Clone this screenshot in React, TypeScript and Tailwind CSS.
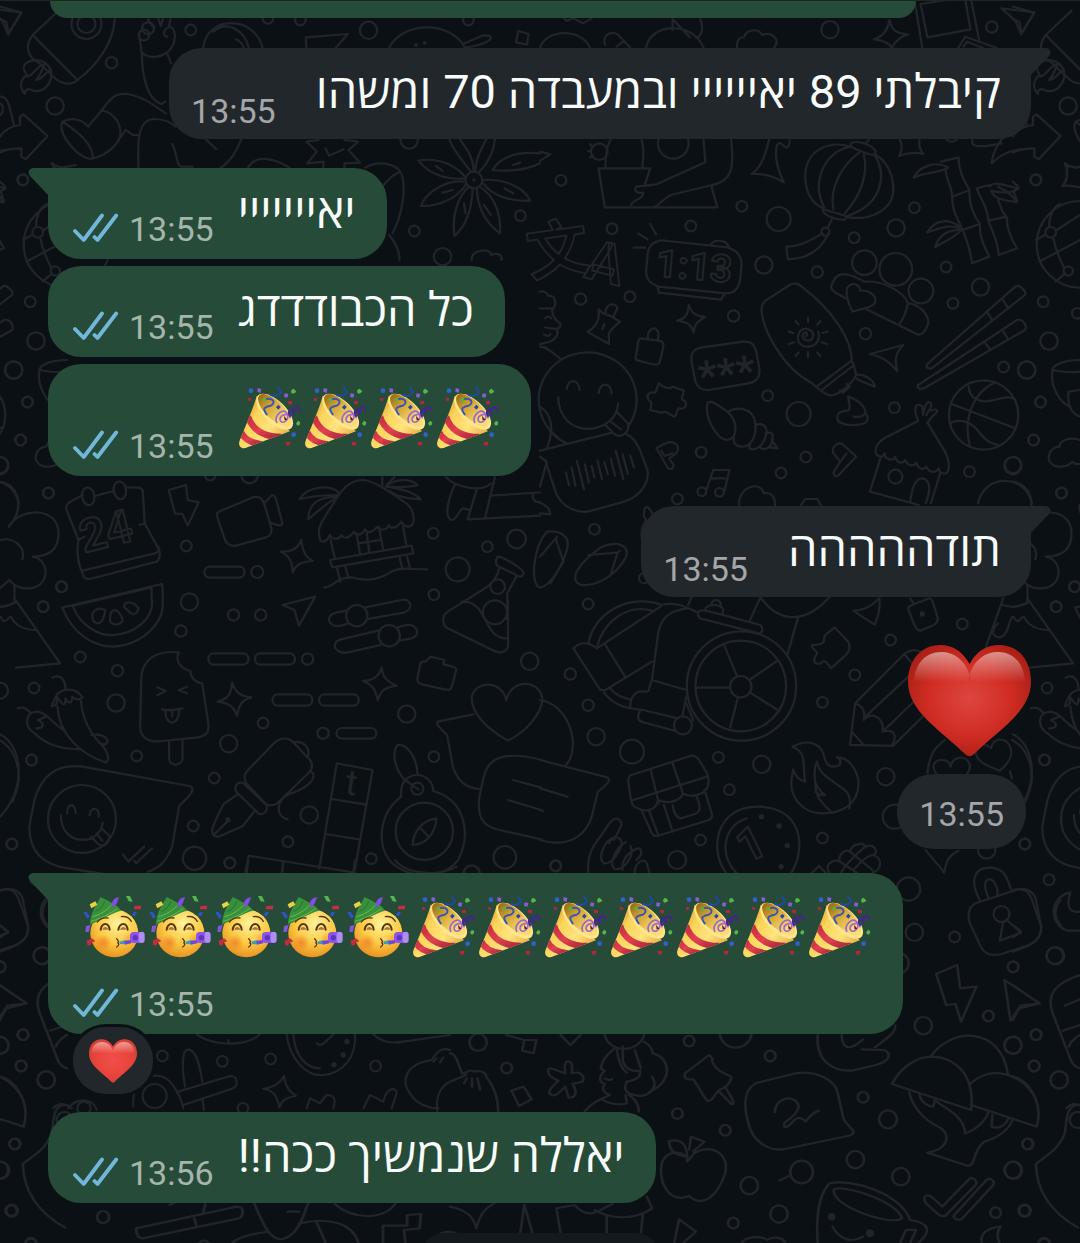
import { useId } from 'react';
import type { ReactNode } from 'react';
import clsx from 'clsx';

type Dot = [x: number, y: number, r: number];

interface Sheet {
  x: number;
  y: number;
  sx: number;
  sy: number;
  dots: Dot[];
  solid?: Dot[];
  paths: string[];
}

// The wallpaper is drawn in sheets, each with its own origin and scale
const sheets: Sheet[] = [
  {
    x: 0, y: 0, sx: 0.3444, sy: 0.3333,
    dots: [[251, 72, 45], [251, 72, 27], [430, 85, 18], [418, 105, 16], [554, 90, 16], [324, 188, 17], [160, 318, 26], [1070, 91, 26], [778, 55, 16], [872, 60, 16], [1188, 420, 26], [66, 540, 16], [1511, 647, 16], [1203, 693, 16], [1285, 770, 26], [1360, 60, 16], [1376, 540, 25]],
    solid: [[1376, 540, 5], [1208, 135, 6], [1233, 129, 6]],
    paths: [
      'M0 20L62 38L25 100L18 65L0 58',
      'M170 32L95 105C70 140 80 170 112 188L160 235C180 255 210 255 225 240C290 190 330 120 333 58M95 105L225 240',
      'M148 210C130 175 95 175 75 190C65 200 70 215 78 225C55 240 58 265 72 282C72 265 85 265 95 272C130 280 155 245 148 210C140 205 130 235 105 240C125 215 125 195 132 192C105 195 100 225 80 230',
      'M405 100C400 115 412 130 410 155C430 180 480 175 500 140C515 110 505 75 490 82C470 90 475 110 485 110M460 57L467 78L473 57M430 57C432 70 440 72 447 85M495 57L490 80M412 160C412 220 425 300 470 312L480 305M485 160L497 190',
      'M590 143C600 45 740 45 762 143M620 95C660 60 710 90 722 143M685 118C700 125 705 135 708 143',
      'M890 143L888 112L1010 102L975 143',
      'M1130 143C1170 62 1310 62 1350 143M1345 132L1400 107C1440 100 1440 130 1350 143',
      'M1505 93L1535 102L1530 134L1498 127Z',
      'M0 410C15 385 40 377 58 375V350L68 343L138 408L75 478L62 470V445C40 445 15 450 0 458',
      'M182 365C160 400 240 490 270 475C310 465 350 430 350 400C350 360 320 332 292 332M182 365C200 380 270 420 270 475M182 365C210 350 240 360 256 380L295 332',
      'M295 332C330 280 345 280 370 282C420 290 450 320 482 340M350 412L365 390L385 405H402M402 503C400 440 395 355 450 357C480 358 500 370 510 380M500 432C515 460 510 490 525 500H560M580 400L627 447M640 503C665 490 690 450 700 418M720 503C740 465 790 470 840 503',
      'M925 420L890 425L920 455L892 490L940 485L938 503M1000 420L1040 425L1012 450L1045 488L1000 490V503M945 445L955 467L998 448',
      'M1350 530C1310 480 1250 475 1215 482C1250 530 1310 540 1350 535M1368 515C1340 480 1310 440 1305 418M1375 512C1375 470 1350 440 1335 418M1380 512C1380 480 1400 440 1412 418M1392 515C1425 480 1435 440 1437 418M1430 510C1460 460 1520 455 1568 460M1430 510C1480 515 1530 510 1568 490',
      'M1403 540C1460 535 1520 560 1540 602C1490 605 1430 590 1403 550M1395 562C1440 590 1455 650 1452 700C1410 670 1385 620 1385 568M1372 568C1370 630 1350 680 1320 708C1310 650 1330 590 1360 562M1352 555C1330 590 1280 620 1222 618C1240 570 1300 540 1348 545',
      'M1265 498L1285 513M1490 495L1510 488M1465 565L1490 580M1405 615L1425 645M1347 610L1352 640M1285 578L1315 570',
      'M1060 503C1100 480 1150 490 1165 520C1180 560 1170 640 1140 700M1160 515C1130 530 1110 560 1108 565M1130 705C1150 730 1160 760 1160 780',
      'M1370 780C1365 745 1430 745 1425 765C1450 755 1460 770 1455 780',
      'M0 290C20 290 25 300 40 375M0 345C10 340 12 315 0 310M0 545L15 560L2 575L12 605H0M150 490L160 503M185 503L220 495',
    ],
  },
  {
    x: 540, y: 0, sx: 0.3444, sy: 0.3333,
    dots: [[1312, 81, 17], [842, 89, 26], [387, 430, 46], [172, 455, 25], [829, 695, 12], [61, 541, 16], [586, 619, 16], [209, 686, 16], [438, 678, 16], [693, 657, 36], [912, 713, 16], [1034, 684, 26], [1087, 623, 16], [1440, 539, 16], [1483, 697, 16], [1568, 733, 130], [1195, 405, 20]],
    paths: [
      'M70 57L80 62L95 55L125 70L150 55',
      'M0 143C20 85 120 85 145 143M190 135C175 105 215 85 232 110L262 143M245 122L222 140',
      'M308 143C320 70 440 60 475 143M385 57V90M385 57L435 112M465 57C475 80 470 100 460 112',
      'M572 143C570 120 580 110 592 112C600 85 635 85 645 105C670 95 700 115 680 143',
      'M1015 60C1020 90 1035 100 1068 103C1045 110 1030 125 1022 143C1010 125 990 120 970 118C995 110 1010 90 1015 60Z',
      'M1088 5L1110 143M1180 0L1105 12L1125 112L1250 88L1235 0M1252 0L1275 120M1215 143L1235 110L1325 143M1230 140L1240 125L1285 143',
      'M1340 25L1435 37L1397 103L1380 62Z',
      'M190 503C190 460 195 435 205 420M295 420C302 440 300 480 297 503M305 552L320 505H170L188 622H515L498 560M145 432L152 440M140 453H148M145 472L153 466',
      'M475 420L480 487L338 553L280 560C270 575 285 580 300 578C300 600 265 600 265 615M555 420C560 480 570 540 500 555L380 585C350 600 345 620 330 622',
      'M0 455L30 463L0 482M665 420C655 460 645 500 615 522C650 520 680 530 708 547C690 510 680 470 688 435C700 420 705 440 715 443C725 440 725 425 725 420',
      'M900 440C840 420 770 450 770 530C772 590 800 615 822 625M900 440C830 455 785 540 825 622M930 455C870 500 840 570 852 628M940 462C955 520 930 590 885 640M972 465C1005 520 1000 610 893 648M975 465C1020 490 1035 560 1020 600C1000 640 950 660 895 652',
      'M905 428C930 420 970 440 975 455C972 470 960 465 935 455C910 445 895 440 905 428ZM822 625C815 645 860 660 885 660L892 650C870 640 835 635 822 625ZM848 658L835 683M838 700C820 740 790 775 720 778L715 740C750 740 790 720 820 700M945 430L955 420',
      'M1045 420C1055 440 1050 455 1043 468C1070 458 1090 455 1113 462C1100 445 1100 430 1102 420M1255 420C1250 440 1270 445 1340 430M1350 405C1325 435 1312 470 1312 490C1340 460 1370 450 1400 448',
      'M1085 533C1100 500 1150 480 1185 503C1160 520 1120 515 1085 533M1165 485L1215 472C1215 510 1230 540 1247 570C1245 610 1255 640 1277 672C1275 710 1290 740 1305 770L1255 790C1250 760 1240 720 1227 690C1215 660 1195 630 1197 590C1195 560 1180 540 1178 512M1197 590L1247 570M1227 690L1277 672',
      'M1305 555L1268 565C1280 600 1300 620 1302 662C1310 690 1330 720 1332 765L1385 745C1370 720 1355 690 1355 650C1340 640 1340 620 1330 600M1302 662L1355 650M1305 560C1320 540 1360 560 1390 565C1370 580 1340 580 1310 572C1320 600 1350 600 1383 607C1375 585 1350 570 1330 560',
      'M1125 697C1145 660 1190 650 1222 685C1180 670 1150 690 1125 697M1225 688C1190 690 1160 700 1147 742C1180 720 1210 710 1222 690',
      'M1568 500C1555 505 1535 500 1525 490C1535 520 1530 545 1517 558C1540 555 1560 560 1568 562',
      'M1568 645L1500 690M1440 720L1466 705M1478 680C1478 650 1490 620 1510 612M1490 712C1495 740 1510 780 1522 803M1450 785L1568 720M1497 845L1525 820',
      'M285 700L312 718M320 672L337 703M272 743H305',
    ],
  },
  {
    x: 540, y: 240, sx: 0.3444, sy: 0.3333,
    dots: [[650, 75, 26], [805, 96, 17], [942, 68, 37], [1033, 88, 49], [1106, 153, 37], [1179, 81, 16], [1199, 190, 16], [1279, 141, 26], [1461, 185, 16], [1560, 220, 16], [118, 177, 17], [261, 170, 16], [562, 228, 17], [945, 281, 17], [1478, 303, 26], [1346, 381, 16], [1413, 390, 26], [661, 467, 16], [751, 522, 36], [1029, 503, 16], [1288, 525, 104], [1453, 486, 16], [1433, 600, 16], [468, 637, 16], [772, 651, 16], [700, 699, 16], [1032, 710, 21], [1247, 695, 16], [1373, 677, 26], [1514, 759, 16], [470, 755, 13], [521, 757, 13], [1534, 93, 14]],
    paths: [
      'M340 5C320 10 312 30 312 50L308 90C308 120 320 130 345 140L540 160C570 160 580 140 582 110L585 75C587 50 570 30 545 22L370 3C355 0 345 0 340 5ZM495 15C505 -5 545 0 548 22M342 142L345 158L525 179L535 163',
      'M0 155C20 150 20 165 25 168C45 165 48 190 40 205H0M35 207C35 230 45 240 60 252C60 270 40 268 15 262M50 270C55 290 40 305 10 310L0 312M12 283C20 290 28 288 30 283M15 235C20 228 28 228 32 235M0 320C20 320 40 340 60 357',
      'M170 208C185 225 195 225 205 228L232 245C215 260 205 270 200 280V312L137 275C160 265 175 240 170 208ZM190 220C190 190 220 185 225 205L212 232M187 252L181 268',
      'M292 295L345 302C358 305 360 310 357 325L348 365C345 375 340 375 325 372L285 362C275 360 277 350 280 340L285 305C287 297 288 295 292 295M313 296C310 260 345 255 344 285L342 300',
      'M432 195C440 222 455 228 480 231C455 245 448 255 446 278C440 250 420 245 398 242C425 235 430 220 432 195Z',
      'M470 322L590 305C615 303 622 315 628 335L637 385C640 410 630 425 605 430L490 450C465 452 455 440 450 420L440 365C437 340 445 327 470 322Z',
      'M725 135C735 128 750 130 760 140C850 210 905 300 905 360L918 400C918 420 870 465 845 466C830 466 800 440 790 430C700 380 650 270 643 215C643 200 645 190 655 182ZM803 440L905 362M818 450L912 375M870 450L880 458L900 440L890 432M918 405C940 400 970 420 972 440L925 420L915 412',
      'M772 290C782 278 768 272 763 284C760 300 785 310 792 292C798 270 770 258 755 274C740 300 755 322 780 320C802 318 815 298 808 276',
      'M778 233V246M742 243L751 254M814 243L805 254M722 275L736 279M835 275L820 279M722 312L738 307M834 312L818 307M742 348L751 337M778 352V337M814 348L805 337',
      'M942 125C890 95 860 90 845 140C843 155 870 165 893 177M942 125C1000 120 1060 160 1068 190C1065 210 1055 235 1045 250M942 205L1095 283C1115 290 1130 250 1127 240C1120 210 1090 190 1068 190M908 215C890 180 880 140 905 133C920 130 930 140 930 152C960 150 980 170 972 190C965 205 930 205 908 215Z',
      'M958 342L1055 315C1030 340 1030 365 1038 394C1010 360 990 350 958 342Z',
      'M1125 372L1380 140C1390 130 1415 155 1408 165L1140 383C1125 390 1118 380 1125 372ZM1297 215L1313 240M1343 178L1360 205M1098 435L1385 240C1405 235 1415 262 1408 270L1115 445C1100 450 1093 442 1098 435ZM1290 305L1308 330M1343 272L1360 298',
      'M52 592A142 142 0 1 1 255 560M78 447C80 415 112 415 115 450M170 460C175 425 205 425 208 460M53 472C55 600 220 590 227 490M190 555L212 578C235 605 265 570 255 550L225 518M205 545L235 568',
      'M345 430C355 440 375 450 385 440L418 452C415 470 405 480 420 482C430 495 420 510 402 505C395 515 398 525 390 530C375 525 370 510 350 518L320 510C325 490 325 485 315 480C308 465 315 455 335 458Z',
      'M485 495C480 530 510 600 545 600C580 590 570 540 545 515C520 500 490 470 485 495ZM545 515C570 500 620 500 625 550C630 590 610 620 590 620C570 620 560 610 563 595M625 555C650 545 665 565 655 590C645 620 625 635 608 625L610 610M655 580C680 570 680 595 670 615C660 630 645 630 640 622M672 600L690 625L665 622',
      'M895 470C925 480 945 500 945 520C955 530 955 550 930 553C890 560 860 550 863 530C865 515 880 512 895 512C905 500 895 490 895 470ZM910 530C925 532 940 528 945 518',
      'M1098 543L1005 592C975 610 970 630 978 645C990 650 995 655 1000 640C1000 660 1030 665 1030 650C1040 675 1055 670 1060 660C1070 680 1085 680 1092 668C1100 690 1115 690 1122 680C1130 700 1150 700 1158 685C1160 705 1185 705 1185 690C1192 670 1180 640 1170 625L1125 548M1098 543C1080 500 1095 485 1110 500L1112 525M1112 525C1120 470 1140 485 1135 500L1122 525M1125 548L1140 528C1165 510 1150 505 1135 512',
      'M988 655L958 755L1100 795M1162 700L1135 790M1075 785C1080 740 1090 715 1110 715C1135 720 1135 750 1120 790',
      'M1197 493L1380 565M1320 428C1270 450 1225 520 1248 618M1245 440C1245 475 1280 490 1310 482C1340 475 1365 465 1380 480M1190 550C1220 535 1250 545 1270 570C1300 610 1310 610 1330 615',
      'M1568 360C1520 360 1490 375 1488 390C1540 400 1568 395 1568 395M1488 390C1480 440 1510 490 1540 500M1568 450L1535 455C1530 490 1540 520 1568 530',
      'M1568 600C1540 590 1510 600 1508 620C1480 620 1465 660 1490 675C1510 685 1535 680 1545 665C1555 675 1568 672 1568 672M1272 790C1290 700 1410 700 1428 790',
      'M0 632L210 578M250 582C275 595 280 610 290 630L312 690C318 730 290 770 245 785L150 812C110 825 60 800 45 755L15 660',
      'M75 697L84 735M92 683L103 738M107 663L128 748M130 673L142 727M150 678L158 713M167 662L180 718M187 668L197 703M205 655L218 707M220 632L242 718M240 643L255 702M262 647L273 683',
      'M0 500C30 520 45 560 20 625M30 575C45 590 60 605 75 608M0 650L20 665L0 740',
      'M338 625L360 612C380 600 405 610 400 630C398 645 380 650 375 655L388 675C388 690 375 690 370 682ZM352 632L362 648L385 640',
      'M918 650L878 612C860 605 845 625 852 640L872 665L853 695C850 710 865 712 870 702ZM872 665L890 640',
      'M483 750L503 690H550L535 755M497 715H545M578 795C575 740 640 720 650 760C670 755 685 770 682 800',
    ],
  },
  {
    x: 0, y: 360, sx: 0.3444, sy: 0.3333,
    dots: [[40, 30, 26], [80, 126, 16], [60, 240, 16], [0, 315, 24], [141, 399, 16], [541, 558, 16], [747, 636, 18], [179, 680, 16], [125, 740, 16], [550, 726, 26], [678, 765, 17], [757, 765, 17], [1258, 520, 16], [1500, 537, 28], [1415, 560, 16], [1329, 628, 36], [1260, 704, 16], [725, 345, 25], [610, 345, 16], [1445, 680, 22]],
    paths: [
      'M0 365C60 375 70 450 25 500C60 440 170 440 170 520C170 580 130 590 95 590C150 600 145 690 75 685C50 685 35 670 27 660L0 685M0 540C40 530 75 560 65 598M42 675V730L0 742',
      'M240 405L205 425C190 435 190 440 195 455L228 540C220 580 230 620 243 650C250 660 260 658 270 655L455 605C465 600 465 580 462 570L420 490L415 395C412 382 405 380 365 383M275 408L330 393M240 632L450 580C462 575 462 570 460 560M228 540L245 530M420 490L405 495',
      'M238 405C238 375 272 375 274 410C276 445 240 445 238 405ZM330 387C330 357 364 357 366 392C368 427 332 427 330 387Z',
      'M490 390L540 375L545 420L577 427L545 497L530 462L508 460Z',
      'M635 455L735 412C760 405 765 425 770 440L788 505C790 525 780 530 770 533L685 557C665 560 655 550 650 530L632 475C628 460 630 458 635 455ZM767 430L790 405C800 405 800 410 820 490C818 500 812 498 785 488',
      'M930 540C915 500 940 480 980 410C1000 380 1020 360 1055 360C1080 362 1110 380 1180 430C1205 450 1210 500 1185 500C1170 500 1170 490 1165 485C1150 510 1130 505 1130 495C1120 515 1100 510 1095 500C1080 520 1065 520 1060 508C1050 530 1030 525 1028 515C1010 540 995 535 992 525C980 545 960 535 958 525C950 545 935 550 930 540Z',
      'M980 405C940 405 900 410 870 417C890 380 960 370 985 400M980 410C950 430 920 455 895 478C895 430 930 410 980 410M1110 352V382M1120 380C1150 355 1190 355 1213 375C1180 385 1150 380 1120 380C1160 385 1200 395 1222 418C1180 415 1150 410 1130 392M1122 375L1145 352',
      'M960 540L972 595M1035 520L1045 580M1100 500L1112 565M1170 500L1180 555M1040 550L1105 540M1065 520L1072 575M958 600L1195 557L1200 580L965 622ZM978 622L988 665M1003 620L1012 655M1160 590L1167 622M1182 590L1190 622M942 683C970 680 980 650 1020 652C1060 665 1090 660 1120 645C1160 615 1190 630 1240 628',
      'M875 540C878 570 885 590 908 603C880 605 860 610 850 637C848 600 840 590 815 575C850 575 865 565 875 540Z',
      'M610 620H695C715 620 715 653 695 653H610C588 653 588 620 610 620Z',
      'M180 743L470 672C474 690 473 705 472 720M210 738L440 682V720',
      'M820 735L915 710L868 797L855 750Z',
      'M1445 590C1460 590 1520 625 1520 640C1515 655 1505 650 1495 643L1445 618C1435 608 1440 598 1445 590ZM1450 625C1440 660 1425 675 1400 690L1300 755M1500 648L1473 700V780',
      'M1295 352C1320 380 1400 400 1425 370M1320 375C1300 420 1290 470 1310 480C1330 480 1330 450 1345 445L1365 450M1385 385L1358 478L1568 467M1437 352L1408 475M1425 407L1568 397M1550 400C1540 420 1560 430 1568 425',
    ],
  },
  {
    x: 540, y: 490, sx: 0.3444, sy: 0.3333,
    dots: [[399, 27, 16], [158, 118, 16], [140, 342, 16], [302, 265, 15], [88, 552, 17], [140, 646, 17], [163, 740, 26], [1018, 450, 16], [914, 555, 16], [820, 637, 16], [1226, 402, 16], [1552, 290, 16], [1499, 350, 16], [267, 785, 36], [585, 588, 164], [583, 588, 136], [583, 590, 32], [415, 706, 27]],
    solid: [[1110, 372, 8]],
    paths: [
      'M20 125C60 120 85 140 80 170C70 220 30 290 0 293C-30 285 -20 170 20 125M50 140L0 200M45 145L68 215L30 280M180 170C230 150 260 170 250 200C230 240 180 290 120 285C80 270 110 220 180 170ZM140 195L225 188L205 255M225 188L232 182',
      'M0 38C20 45 30 60 30 73L0 70M315 100L302 80C300 40 315 45 328 75M305 95C295 110 290 140 300 160M758 45L770 27H805L815 45',
      'M535 467L572 558M688 513L608 570M450 593H550M695 663L610 608M552 713L575 622',
      'M460 365C470 355 480 362 640 405C650 415 645 430 635 430L465 385C458 378 458 370 460 365ZM480 360C480 345 500 345 510 345C530 350 535 355 530 370M497 345C500 325 525 325 525 347',
      'M97 475C115 455 140 455 165 475L350 350M97 475L175 600H190L325 515M140 460C160 370 250 310 355 345M165 475C180 400 250 340 325 362M188 462L247 560M350 345C400 335 420 350 460 368M430 355C370 360 350 390 343 430L325 570C310 605 325 605 300 605C280 600 260 620 262 655M185 607C210 640 240 655 300 660L400 685M205 597C225 620 245 625 262 628M325 570L425 600M425 620L413 680M290 665C280 680 285 695 300 697L390 722M445 690L425 640',
      'M440 322L430 345M610 390L640 322C680 380 720 385 750 380C790 375 820 345 840 322M750 380L718 495',
      'M910 362C950 360 970 340 985 325C990 360 980 385 972 404L935 380Z',
      'M1080 345L1130 325C1140 325 1140 335 1155 385C1155 400 1150 405 1105 422C1090 420 1090 410 1070 360C1068 350 1072 350 1080 345ZM1075 325L1085 340',
      'M855 412L895 455C905 480 895 490 870 512L845 535C835 520 825 505 815 520C795 525 790 510 805 490C800 475 785 475 790 465C810 465 825 460 825 450C822 430 840 430 855 412Z',
      'M915 640L1060 490C1080 475 1100 480 1110 490M945 680L1085 545M1060 495L1080 520M1000 720L1110 610M915 640L900 765L1025 768L1140 650M905 725L940 765M915 640C940 650 945 670 940 690C970 660 1000 690 995 725C1030 715 1040 740 1020 768',
      'M1345 325L1295 470M1415 325L1548 520L1420 533M1345 345C1370 355 1400 350 1418 335M1330 400C1310 420 1310 440 1335 442C1365 435 1360 380 1375 380C1390 410 1395 380 1405 380C1420 410 1450 420 1475 420',
      'M0 630C60 640 90 700 95 750C97 790 90 810 75 825',
    ],
  },
  {
    x: 0, y: 600, sx: 0.3444, sy: 0.3333,
    dots: [[525, 93, 17], [233, 171, 16], [341, 212, 17], [99, 264, 16], [337, 309, 26], [0, 272, 24], [893, 177, 17], [764, 369, 16], [664, 431, 26], [397, 468, 16], [91, 480, 16], [938, 400, 17], [1181, 342, 26], [1260, 470, 16], [622, 534, 16], [561, 678, 16], [34, 732, 16], [565, 775, 35], [667, 789, 16], [836, 725, 16], [898, 645, 26], [1078, 776, 16], [1538, 184, 26], [1466, 772, 34], [1036, 47, 32], [1130, 107, 32], [1437, 37, 36], [238, 657, 102], [1232, 694, 86], [1212, 566, 18]],
    solid: [[662, 660, 8]],
    paths: [
      'M182 25C210 100 270 140 330 140C410 135 480 70 472 0M212 20C235 80 290 108 330 105C390 100 445 60 442 0M268 45C270 30 290 20 305 30C305 50 295 70 282 70C270 65 268 60 268 45ZM320 65C318 40 325 25 340 32C355 50 358 60 355 65C345 75 330 78 320 65ZM360 20C360 0 390 5 402 25C400 40 390 45 380 40Z',
      'M1004 32L975 38C940 48 955 85 990 77L1012 70M1060 22L1165 0C1190 -8 1205 25 1175 37L1068 57M1098 92L990 118C955 128 975 165 1010 157L1105 135M1155 82L1180 75C1210 70 1225 105 1195 115L1160 122',
      'M1300 35C1285 45 1280 75 1300 85L1440 155C1455 160 1470 155 1475 140V0M1340 5C1420 0 1400 120 1475 115',
      'M620 160H705C727 160 727 194 705 194H620C600 194 600 160 620 160ZM756 160H840C862 160 862 194 840 194H756C735 194 735 160 756 160ZM807 283H891C912 283 912 317 891 317H807C786 317 786 283 807 283ZM942 283H1026C1047 283 1047 317 1026 317H942C921 317 921 283 942 283ZM993 384H1077C1098 384 1098 416 1077 416H993C972 416 972 384 993 384Z',
      'M152 233C180 220 190 245 190 268M150 318C170 320 165 300 165 290C185 320 190 320 190 295C200 315 210 310 210 290C220 300 230 300 240 293C220 260 180 265 165 285C155 300 155 310 150 318M167 320C170 400 230 460 305 487C320 485 315 460 300 440C270 410 240 370 235 303M52 325C70 318 80 330 90 340M100 400C70 380 70 335 110 335C140 340 150 370 185 390M100 400C130 430 170 450 235 447M105 385C130 385 130 370 110 360C125 355 130 350 135 350M265 405C290 400 310 410 312 425C310 435 300 435 290 430',
      'M0 403C70 440 75 570 0 650',
      'M520 157C450 150 410 180 410 240L407 380C407 410 430 430 470 423L575 412C600 405 607 400 605 370L587 250C565 248 553 230 553 213C520 205 508 180 520 157ZM491 422V475C491 500 530 500 530 475V418M457 262L481 273L457 286M543 260L519 271L543 280M470 328C490 333 510 330 530 325M480 332C480 380 520 380 520 330M500 333V350',
      'M674 248C685 280 700 290 730 292C700 300 695 315 688 347C680 320 665 310 632 305C665 295 672 280 674 248ZM1108 202C1112 235 1125 245 1152 257C1120 262 1105 270 1097 301C1090 265 1080 255 1054 243C1085 240 1100 230 1108 202Z',
      'M1235 185L1250 170L1290 180L1287 193L1315 200C1328 205 1325 210 1322 220L1312 260C1308 272 1300 270 1290 268L1225 253C1212 250 1210 240 1213 230L1220 192C1222 183 1228 185 1235 185Z',
      'M1475 422C1420 390 1365 340 1370 290C1380 240 1460 240 1470 302C1485 230 1572 240 1575 300C1570 340 1535 390 1475 422ZM1375 343L1270 365V375L1298 405L1315 500C1330 550 1360 565 1392 567',
      'M1572 480C1500 460 1420 455 1405 530L1392 590C1385 650 1400 680 1450 690L1572 718M1490 540L1572 563M1475 600L1572 630',
      'M100 600C120 530 160 490 240 500L550 558C565 565 565 575 520 618L500 740C480 790 460 805 430 815M100 600L85 680C85 750 120 795 200 805L350 830M195 640C195 605 220 610 220 640M260 645C262 620 288 620 287 650M177 645C175 740 290 740 298 668M265 710L285 732C305 750 325 715 315 705L295 685M280 700L297 722M357 763L373 785L418 740M390 782L395 790L442 745',
      'M800 425C820 410 840 415 850 425L900 480C910 495 905 510 895 520L805 610C790 620 775 615 770 610L715 550C705 530 712 520 720 510ZM700 548C680 550 680 570 690 580L750 640C765 650 785 625 770 612L705 548ZM690 583L650 612C635 640 620 670 616 690C615 710 630 712 640 708L705 678L738 635M625 700L660 665M850 427C880 420 900 440 895 470M905 515C925 540 880 570 840 582C800 600 800 650 835 658',
      'M978 490L1082 510L1030 810M978 490L927 805M963 597L1060 613M945 702L1043 718M713 815L722 767L1030 818M822 790L820 815',
      'M1165 590C1100 640 1095 730 1130 780C1180 840 1290 840 1330 780C1370 700 1350 600 1258 573M1165 590C1160 540 1190 525 1212 525C1240 525 1258 550 1258 573M1212 520C1210 470 1180 430 1155 435C1140 450 1140 500 1175 540L1215 568M1267 655C1230 660 1200 690 1198 735C1235 735 1265 700 1267 655ZM1218 682L1245 710',
    ],
  },
  {
    x: 540, y: 740, sx: 0.3444, sy: 0.3333,
    dots: [[518, 52, 16], [644, 73, 26], [550, 149, 16], [466, 300, 16], [46, 377, 16], [398, 360, 27], [1004, 110, 26], [820, 294, 16], [1465, 60, 16], [1408, 312, 16], [1478, 419, 16], [1070, 447, 35], [1087, 577, 26], [1204, 591, 16], [1374, 681, 16], [1497, 647, 26], [1030, 230, 36], [1297, 330, 26], [1340, 522, 24]],
    solid: [[643, 230, 8], [694, 258, 8], [718, 317, 8], [700, 380, 8]],
    paths: [
      'M0 60L195 112C205 118 205 125 168 155L155 210C140 290 80 325 0 300M0 145L80 170M0 210L8 213',
      'M265 105L440 47C455 45 460 55 485 100C495 130 485 150 470 160C450 170 430 170 415 160C410 180 380 190 360 185C345 180 340 180 340 190C330 215 300 215 285 205C265 200 265 190 257 130C255 115 257 110 265 105ZM270 180L485 110M322 92L345 190M385 70L415 160M295 212L325 280C330 290 340 290 350 285L490 240C500 235 500 230 500 225L478 150M318 215L343 285M360 195L385 275M385 195C390 225 400 235 410 235L450 222C465 215 465 210 462 190L455 170',
      'M733 20C790 -10 820 20 825 50C835 90 855 80 870 75C875 60 870 55 862 52C900 50 925 100 925 130C925 190 880 220 820 220C760 220 725 170 730 120C732 95 738 90 735 88C745 115 755 120 770 125C760 80 780 40 733 20M805 65C790 90 800 120 800 140C800 180 840 205 845 218M805 65C810 110 860 125 890 155C905 175 900 195 898 205M800 130C810 150 820 160 828 165C815 168 805 160 800 155',
      'M540 398C490 330 510 200 632 200C760 200 775 320 730 398M600 235C530 260 520 345 570 398',
      'M140 398C135 340 160 310 175 290L205 245C225 225 245 245 232 265L215 300M215 292C190 300 165 350 185 370C210 375 245 320 235 300C225 288 210 290 200 310M250 307C220 320 200 370 215 385C240 400 280 340 262 318M285 325C250 335 235 370 240 390M290 325C300 340 290 350 280 360M275 398C275 370 300 350 310 370L318 398',
      'M840 398C825 375 850 355 870 365C865 345 885 325 900 335C905 312 935 305 945 320C975 305 985 345 965 345C995 350 995 390 965 398M870 365L920 398M900 335L965 390M945 320C920 340 880 380 875 398M965 345C940 350 920 380 910 390M790 398L810 378L830 398',
      'M1125 100C1130 40 1150 20 1175 0M1370 0C1410 20 1430 70 1428 120C1425 150 1415 170 1410 185M1150 100C1135 80 1145 60 1165 60C1180 60 1190 65 1192 80C1200 45 1240 45 1248 75C1250 90 1245 95 1240 100M1335 92C1290 75 1260 60 1265 25C1280 5 1300 15 1310 25C1315 -5 1340 -5 1355 5C1385 40 1360 70 1335 92M1365 95L1370 115M1120 330C1140 360 1160 375 1173 398C1180 370 1180 350 1215 332',
      'M1265 490L1390 447C1420 445 1435 460 1440 480L1455 560C1455 590 1445 600 1420 615L1340 642C1310 650 1290 640 1280 620L1248 550C1240 520 1245 500 1265 490ZM1278 483C1240 410 1270 380 1310 383C1350 388 1355 410 1367 447M1303 475C1280 420 1300 415 1312 420C1325 430 1330 450 1328 463M1345 545L1335 602L1397 578L1355 540',
      'M1540 457C1480 470 1475 550 1530 572L1568 572M1540 457C1530 490 1530 520 1568 515',
    ],
  },
  {
    x: 0, y: 860, sx: 0.3333, sy: 0.3333,
    dots: [[125, 287, 25], [0, 320, 16], [70, 524, 16], [0, 556, 25], [63, 618, 16], [139, 659, 26], [487, 588, 16], [667, 604, 16], [812, 597, 16], [1127, 618, 16], [464, 708, 36], [729, 745, 16], [690, 8, 16], [252, 745, 20]],
    solid: [[1041, 545, 8], [1030, 585, 8], [1002, 614, 8]],
    paths: [
      'M0 90C30 85 45 90 55 115L85 200C85 240 60 255 0 275M0 195L25 215L0 232M0 375L80 430L20 445L0 480M143 120C125 140 120 170 143 195',
      'M860 523C870 600 920 650 970 645C1030 640 1070 590 1065 523M880 523C885 590 920 625 960 625M950 550C960 560 970 555 1000 523',
      'M590 523C640 560 740 560 780 523M685 540V550M1120 523C1150 550 1180 550 1210 545L1350 525',
      'M852 648C855 680 870 695 888 708C860 712 845 720 838 742C830 700 815 690 790 687C825 680 840 670 852 648Z',
      'M555 680C545 620 545 570 565 568C590 570 600 620 607 665M535 695L690 648C715 648 715 675 700 685L550 735M400 740C395 680 430 640 480 648C520 655 545 720 550 745M607 715L612 750',
      'M920 745L930 715L960 730L980 705C1000 705 1010 715 1000 745M1090 745L1110 705L1150 725C1160 680 1190 680 1190 700L1175 745',
      'M160 745C180 720 210 740 215 745M205 745C230 710 280 715 290 750M0 650C50 660 75 720 75 750',
      'M1350 570C1320 560 1310 580 1295 600C1220 610 1200 660 1230 700C1250 735 1290 745 1315 745M1312 755C1305 700 1330 675 1350 665M1300 605L1310 595M1320 608L1330 592',
      'M850 10L845 39M1065 0L1060 39M740 39L745 0M1185 0C1220 45 1320 50 1370 20',
    ],
  },
  {
    x: 450, y: 860, sx: 0.4018, sy: 0.3333,
    dots: [[70, 547, 26], [54, 40, 24], [263, 18, 16], [141, 624, 16], [595, 543, 16], [797, 588, 16], [566, 761, 16], [685, 811, 16], [745, 977, 26], [875, 936, 34], [705, 1089, 16], [819, 1062, 26], [1009, 899, 26], [1122, 950, 26], [1028, 712, 16], [1090, 778, 27], [1178, 497, 26], [1340, 468, 16], [1458, 524, 16], [1401, 556, 26], [1454, 618, 16], [1516, 660, 26], [1438, 852, 16], [1402, 931, 26], [1358, 1058, 16], [1430, 1052, 16], [1478, 1150, 16], [711, 515, 48], [1115, 310, 32], [1562, 780, 24]],
    solid: [[950, 1070, 11], [1045, 1120, 12]],
    paths: [
      'M1210 342L1262 315L1270 385L1310 380L1272 485L1258 432L1235 435ZM1380 360L1467 430L1420 437L1395 482Z',
      'M1568 345C1500 370 1485 410 1500 460L1545 600C1550 620 1568 625 1568 625M1530 437L1568 418M1525 512L1568 495M1540 560C1545 540 1568 525 1568 525',
      'M1100 672C1140 580 1230 560 1280 640C1300 680 1300 720 1297 750ZM1198 587C1250 500 1370 500 1388 640M1297 670C1330 630 1400 620 1450 700C1470 740 1465 780 1460 800L1297 735M1143 697C1150 740 1180 780 1215 800C1250 820 1240 870 1188 878L1290 918C1310 915 1300 870 1330 845C1370 830 1390 810 1400 780M1205 720C1240 750 1280 770 1282 820C1310 810 1335 780 1340 755M1168 705C1175 730 1190 740 1203 740L1207 722M1350 765L1348 800C1370 810 1385 790 1390 775',
      'M915 525C910 600 950 635 1000 632L1060 615C1095 605 1100 580 1080 570L1025 568M975 525C975 560 990 580 1028 538M1108 497C1110 520 1080 540 1058 562',
      'M645 585L585 640C580 655 590 660 605 658C620 680 625 700 640 722C650 730 660 700 670 690C690 680 700 665 700 650C680 640 650 620 653 595ZM670 695L700 732C710 735 708 725 685 682',
      'M760 670L860 640C910 630 960 660 965 700L980 780L1003 812C1008 820 1000 825 990 828L830 868C790 875 755 840 745 800C730 740 730 690 760 670ZM808 757C810 710 860 700 868 740C860 780 825 780 832 800C850 810 855 750 885 785C900 760 910 755 918 752',
      'M140 525L185 540L180 572L208 580L215 540L185 540M275 525L300 555L325 525M153 692L183 680L203 718L172 738Z',
      'M290 605C305 600 305 620 303 640C330 630 335 655 330 665L305 672C320 700 310 715 295 712L287 680C270 700 260 715 247 700C245 685 265 670 270 662C240 650 240 625 250 625C270 630 280 640 287 640C285 625 285 610 290 605Z',
      'M385 525C395 580 470 580 483 525M410 565C375 600 380 610 375 625L385 632C370 650 370 665 385 672C375 690 385 700 398 705L380 715C360 725 345 740 335 755M380 720C400 735 430 735 440 730L437 705M470 755C470 730 455 710 445 705M415 570C420 610 430 630 440 638M430 560V600C435 630 455 635 473 632C475 655 460 660 440 665C430 690 440 700 460 705C480 712 490 705 498 695C560 660 545 590 505 580C500 555 490 550 483 545M460 570L475 625M495 700C515 680 510 665 503 650M385 655C392 662 400 660 403 657',
      'M590 905L610 878C650 850 695 880 685 940C665 1010 630 1045 595 1008C550 1030 525 980 525 930C525 880 560 865 590 890M590 890C550 885 545 860 545 843C580 835 590 860 590 890L590 905M595 870L600 830L633 845L605 875',
      'M848 945L820 962M945 970C920 1000 910 1060 915 1149M945 970C1000 955 1120 1000 1145 1080C1200 1090 1195 1120 1165 1149M955 990C970 970 1110 1020 1125 1075C1100 1100 950 1040 955 990ZM1120 1149L1135 1110H1160L1145 1149M952 1100C970 1140 1000 1150 1028 1130',
      'M1182 1010C1190 1000 1200 1010 1225 1040L1290 960C1300 945 1315 965 1308 975L1235 1065C1225 1075 1215 1065 1185 1030C1178 1020 1180 1015 1182 1010ZM1255 1065L1335 960C1345 950 1358 965 1352 975L1275 1075C1265 1085 1250 1075 1255 1065Z',
      'M558 1149L570 1078L612 1115L580 1149M725 1149C740 1125 780 1130 790 1140C810 1125 830 1135 835 1149M1370 1100C1320 1105 1320 1140 1325 1149M1370 1100C1360 1115 1362 1140 1368 1149',
      'M1568 735C1530 730 1535 790 1530 820C1515 870 1480 890 1458 912C1460 1000 1500 1060 1563 1103',
      'M185 1035L175 1118M185 1035L205 1118M275 1118L265 1045L310 1035C350 1090 380 1040 405 1032M360 1050C400 1080 460 1080 503 1045L490 1010M390 1070V1118M480 1065L475 1118M0 1040C40 1050 60 1070 65 1105C75 1070 80 1050 110 1030',
      'M0 580C15 580 20 610 30 640C50 640 40 625 60 635C80 630 90 640 90 650C110 680 120 720 120 755M0 665L40 645M35 670L42 655M55 680V655M75 690L68 655',
    ],
  },
  {
    x: 0, y: 1080, sx: 0.4464, sy: 0.3333,
    dots: [[33, 192, 16], [0, 270, 25], [26, 392, 18], [231, 411, 18], [70, 494, 18], [457, 500, 18]],
    paths: [
      'M305 445L530 380C550 380 545 410 535 415L320 475C305 475 305 455 305 445ZM380 375L395 365M435 415L440 437M460 372L455 400',
      'M858 489V437H912V405L943 402L940 445L905 450L908 489M570 372C590 430 600 475 630 478C670 470 680 400 690 372M645 395H670M670 430C740 410 790 430 803 489M520 489C540 465 580 460 600 455M710 430L730 489M750 372C790 420 860 420 885 372M975 489C980 450 1010 450 1025 462',
    ],
  },
];

function DoodleSheet({ sheet }: { sheet: Sheet }) {
  const ratio = sheet.sy / sheet.sx;
  return (
    <g transform={`translate(${sheet.x} ${sheet.y}) scale(${sheet.sx} ${sheet.sy})`} strokeWidth={6.6}>
      {sheet.paths.map((d) => <path key={d} d={d} />)}
      {sheet.dots.map(([x, y, r]) => <ellipse key={`${x}-${y}-${r}`} cx={x} cy={y} rx={r * ratio} ry={r} />)}
      {sheet.solid?.map(([x, y, r]) => (
        <ellipse key={`s${x}-${y}`} cx={x} cy={y} rx={r * ratio} ry={r} fill="#212529" stroke="none" />
      ))}
    </g>
  );
}

function Wallpaper() {
  return (
    <svg
      aria-hidden="true"
      direction="ltr"
      className="absolute inset-0 h-full w-full"
      viewBox="0 0 1080 1243"
      preserveAspectRatio="xMidYMin slice"
      fill="none"
      stroke="#212529"
      strokeLinecap="round"
      strokeLinejoin="round"
    >
      <g id="doodles">
        {sheets.map((sheet) => <DoodleSheet key={`${sheet.x}-${sheet.y}`} sheet={sheet} />)}
        <g strokeWidth="2" fontFamily="Roboto, sans-serif" fontWeight="700">
          <text fontSize="38" transform="translate(655 276) rotate(5)">1:13</text>
          <text fontSize="46" transform="translate(84 553) rotate(-14)">24</text>
          <text fontSize="46" transform="translate(746 864) rotate(-26)">1</text>
          <text fontSize="56" transform="translate(583 277) rotate(14)">A</text>
          <text fontSize="62" fontFamily="'Noto Sans CJK SC', sans-serif" transform="translate(530 276) rotate(-8)">文</text>
          <text fontSize="36" fontWeight="400" fill="#212529" stroke="none" transform="translate(344 794) rotate(8)">t</text>
          <text fontSize="42" fill="#212529" stroke="none" transform="translate(700 391) rotate(-7)">***</text>
        </g>
      </g>
      {/* the pattern repeats sideways */}
      <use href="#doodles" x="1013" />
      <use href="#doodles" x="-1013" />
    </svg>
  );
}

function PartyPopper() {
  const id = useId();
  return (
    <svg viewBox="48 46 192 192" className="size-16 shrink-0" role="img" aria-label="קונפטי">
      <defs>
        <linearGradient id={`${id}cone`} x1="0" y1=".3" x2="1" y2="1">
          <stop offset="0" stopColor="#d99a2b" />
          <stop offset=".25" stopColor="#fbd45a" />
          <stop offset=".55" stopColor="#ffe37c" />
          <stop offset="1" stopColor="#dd9230" />
        </linearGradient>
        <linearGradient id={`${id}stripe`} x1="0" y1="0" x2="1" y2="1">
          <stop offset="0" stopColor="#c42c40" />
          <stop offset=".5" stopColor="#e2414f" />
          <stop offset="1" stopColor="#a3263a" />
        </linearGradient>
        <linearGradient id={`${id}mouth`} x1="0" y1="0" x2="1" y2="0">
          <stop offset="0" stopColor="#9a6b12" />
          <stop offset=".35" stopColor="#d5a634" />
          <stop offset=".8" stopColor="#fbdc74" />
        </linearGradient>
        <clipPath id={`${id}clip`}>
          <path d="M104 78C97 110 62 190 52 216C48 232 62 240 76 233L204 185Z" />
        </clipPath>
      </defs>
      <path d="M104 78C97 110 62 190 52 216C48 232 62 240 76 233L204 185Z" fill={`url(#${id}cone)`} />
      <g clipPath={`url(#${id}clip)`} fill="none" stroke={`url(#${id}stripe)`} strokeWidth="19">
        <path d="M78 140C90 178 118 202 178 202" />
        <path d="M56 184C64 206 84 220 120 224" />
      </g>
      <ellipse cx="158" cy="126" rx="70" ry="33" transform="rotate(44 158 126)" fill="#ffe68c" />
      <ellipse cx="158" cy="122" rx="64" ry="27" transform="rotate(44 158 122)" fill={`url(#${id}mouth)`} />
      <g fill="none" strokeLinecap="round">
        <path d="M146 76C164 84 178 72 176 66C174 58 166 56 168 52" stroke="#1f4aa0" strokeWidth="6" />
        <path d="M134 88C154 84 162 100 146 108C124 112 122 118 134 134" stroke="#3a56b4" strokeWidth="6" />
        <path d="M164 158C156 140 182 112 194 130C206 152 178 168 174 150C174 134 204 128 204 144" stroke="#9a68cf" strokeWidth="5" />
        <path d="M204 138C196 122 208 114 216 126M214 132C212 112 230 106 232 122" stroke="#43258c" strokeWidth="7" />
      </g>
      <path d="M186 138L196 150L188 152Z" fill="#64151f" />
      <g fill="#3161cc">
        <circle cx="87" cy="63" r="7" />
        <path d="M162 113L169 105L176 112L169 120Z" fill="#2547a8" />
        <circle cx="215" cy="195" r="7" />
      </g>
      <path d="M107 55L118 58L116 70L106 66ZM188 71L199 73L196 84L186 82Z" fill="#855fd8" />
      <path d="M79 84L89 87L85 95L77 92ZM198 94L210 94L210 104L199 104ZM191 217L205 217L203 228L192 227Z" fill="#b5253d" />
      <path d="M214 57L219 61L223 66L217 71L210 72L207 66L209 60ZM228 153L235 158L233 166L227 168L222 162ZM126 84L133 88L131 96L123 95L121 88Z" fill="#57b548" />
    </svg>
  );
}

function PartyFace() {
  const id = useId();
  return (
    <svg viewBox="66 44 192 192" className="size-16 shrink-0" role="img" aria-label="פרצוף חוגג">
      <defs>
        <radialGradient id={`${id}skin`} cx=".56" cy=".3" r=".75">
          <stop offset="0" stopColor="#fff39a" />
          <stop offset=".55" stopColor="#fbc942" />
          <stop offset="1" stopColor="#e68a1c" />
        </radialGradient>
        <radialGradient id={`${id}blush`}>
          <stop offset="0" stopColor="#f0802a" stopOpacity=".85" />
          <stop offset="1" stopColor="#f0802a" stopOpacity="0" />
        </radialGradient>
      </defs>
      <circle cx="163" cy="162" r="72" fill={`url(#${id}skin)`} />
      <circle cx="130" cy="190" r="25" fill={`url(#${id}blush)`} />
      <circle cx="205" cy="178" r="18" fill={`url(#${id}blush)`} opacity=".5" />
      <path d="M90 136C90 100 112 72 122 53C146 66 172 76 184 94C160 98 120 124 90 136Z" fill="#38913a" />
      <path d="M97 112C118 108 142 92 156 76M94 126C118 120 152 102 172 88" fill="none" stroke="#6cb955" strokeWidth="3" />
      <path d="M106 96C118 92 128 84 134 66" fill="none" stroke="#236f2d" strokeWidth="3" />
      <g fill="none" stroke="#59350e" strokeLinecap="round">
        <path d="M112 128C120 118 132 114 144 116M184 112C198 110 208 116 214 126" strokeWidth="4" />
        <path d="M122 151C126 128 146 128 149 151M175 151C180 128 200 128 203 151" strokeWidth="6" />
        <path d="M170 178C178 186 176 190 172 190C178 192 178 198 170 203" strokeWidth="4" />
      </g>
      <path d="M127 151C130 140 142 140 145 151ZM180 151C184 140 196 140 199 151Z" fill="#a5763a" />
      <path d="M178 187L196 182V195L180 194Z" fill="#3e9bb4" />
      <path d="M194 184L214 182V192L194 196Z" fill="#6d48d4" />
      <rect x="210" y="158" width="40" height="33" rx="11" fill="#8a55ea" />
      <rect x="236" y="157" width="18" height="34" rx="9" fill="#b08cf5" />
      <circle cx="226" cy="175" r="8" fill="#6233bd" />
      <path d="M89 75L106 66L112 76L94 87Z" fill="#e8d047" />
      <path d="M154 80C156 64 164 54 178 54C172 64 172 74 162 83Z" fill="#804fe0" />
      <path d="M198 50L210 50L218 67L206 66Z" fill="#52b54e" />
      <path d="M223 80L243 79V90H222Z" fill="#c92c44" />
      <path d="M70 98L80 98L90 112L82 118ZM222 97L231 99L224 111L215 107Z" fill="#2c55c9" />
      <path d="M78 140L92 137L86 158L76 158Z" fill="#8556dc" />
      <path d="M80 184L96 177L106 186L94 190L90 200L82 196Z" fill="#cb2a3c" />
    </svg>
  );
}

function Heart({ className, soft }: { className: string; soft?: boolean }) {
  const id = useId();
  return (
    <svg viewBox="0 0 123 112" className={className} role="img" aria-label="לב">
      <defs>
        <radialGradient id={`${id}body`} cx=".5" cy=".48" r=".62">
          <stop offset="0" stopColor={soft ? '#f0504a' : '#de463f'} />
          <stop offset=".55" stopColor={soft ? '#e8453c' : '#cf2c22'} />
          <stop offset="1" stopColor={soft ? '#cf3d33' : '#a01c14'} />
        </radialGradient>
        <linearGradient id={`${id}shine`} x1="0" y1="0" x2="0" y2="1">
          <stop offset="0" stopColor="#fff" stopOpacity=".5" />
          <stop offset="1" stopColor="#fff" stopOpacity="0" />
        </linearGradient>
      </defs>
      <path
        d="M61.5 19C54 5 43 0 32 0C13 0 0 15 0 37C0 67 34 86 57 109C60 112 63 112 66 109C89 86 123 67 123 37C123 15 110 0 91 0C80 0 69 5 61.5 19Z"
        fill={`url(#${id}body)`}
      />
      <path d="M61.5 30C57 15 46 7 33 7C18 7 7 18 6 37H60ZM61.5 30C66 15 77 7 90 7C105 7 116 18 117 37H63Z" fill={`url(#${id}shine)`} />
    </svg>
  );
}

function ReadTicks() {
  return (
    <svg
      viewBox="73 211 46 32"
      className="h-8 w-[46px]"
      fill="none"
      stroke="#71b7da"
      strokeWidth="3.8"
      strokeLinecap="round"
      strokeLinejoin="round"
      role="img"
      aria-label="נקרא"
    >
      <path d="M75 229L83.7 238L102 213.5M94.5 235L97.5 238L116.2 213.5" />
    </svg>
  );
}

interface BubbleProps {
  time: string;
  sent?: boolean;
  tail?: boolean;
  stacked?: boolean;
  className?: string;
  reaction?: ReactNode;
  children: ReactNode;
}

function Bubble({ time, sent, tail, stacked, className, reaction, children }: BubbleProps) {
  return (
    <article
      className={clsx(
        'relative flex max-w-full rounded-[33px] pt-4 pb-2',
        stacked ? 'flex-col' : 'items-end',
        sent ? 'self-end bg-[#274b39] pr-[31px] pl-[25px]' : 'self-start bg-[#22272b] pr-[30px] pl-[22px]',
        !stacked && (sent ? 'gap-6' : 'gap-10'),
        tail && (sent ? 'rounded-tl-none' : 'rounded-tr-none'),
        className,
      )}
    >
      {tail && (
        <svg
          aria-hidden="true"
          viewBox="0 0 21 28"
          className={clsx('absolute top-0 h-7 w-[21px]', sent ? '-left-5 fill-[#274b39]' : '-right-5 -scale-x-100 fill-[#22272b]')}
        >
          <path d="M6 0H21V28L2 8C-1 4 1 0 6 0Z" />
        </svg>
      )}
      <div className="self-start pb-3 text-[47px] leading-[55px] text-[#f7fbf9]">{children}</div>
      <div className={clsx('flex shrink-0 items-center gap-[10px]', sent && 'pb-[2px]', stacked && 'mt-[7px] self-end')}>
        <time className={clsx('text-[34px] leading-10', sent ? 'text-[#a5b5ac]' : 'text-[#a4a6a8]')}>{time}</time>
        {sent && <ReadTicks />}
      </div>
      {reaction}
    </article>
  );
}

function EmojiRow({ poppers, faces = 0 }: { poppers: number; faces?: number }) {
  return (
    <div className={clsx('flex gap-0.5 pt-[5px] pb-[7px]', faces > 0 && 'pl-[9px]')}>
      {Array.from({ length: poppers }, (_, i) => <PartyPopper key={`p${i}`} />)}
      {Array.from({ length: faces }, (_, i) => <PartyFace key={`f${i}`} />)}
    </div>
  );
}

export default function App() {
  return (
    <main
      dir="rtl"
      lang="he"
      className="relative h-screen overflow-hidden bg-[#0b1014] font-[Roboto,'Open_Sans','Liberation_Sans',sans-serif]"
    >
      <Wallpaper />
      <section className="relative flex flex-col border-t border-[#1b2725] pr-[49px] pl-12">
        {/* end of the message above */}
        <div aria-hidden="true" className="mr-[115px] ml-0.5 h-[17px] rounded-b-[33px] bg-[#274b39]" />

        <Bubble time="13:55" tail className="mt-[30px]">קיבלתי 89 יאיייייי ובמעבדה 70 ומשהו</Bubble>

        <Bubble time="13:55" sent tail className="mt-[29px]">יאייייייי</Bubble>
        <Bubble time="13:55" sent className="mt-[7px]">כל הכבודדדג</Bubble>
        <Bubble time="13:55" sent className="mt-[7px]">
          <EmojiRow poppers={4} />
        </Bubble>

        <Bubble time="13:55" tail className="mt-[30px]">תודההההה</Bubble>

        <div className="mt-12 flex flex-col items-start">
          <Heart className="h-28 w-[123px]" />
          <time className="mt-[17px] mr-[5px] rounded-[37px] bg-[#22272b] px-[22px] pt-5 pb-[15px] text-[34px] leading-10 text-[#a4a6a8]">
            13:55
          </time>
        </div>

        <Bubble
          time="13:55"
          sent
          tail
          stacked
          className="mt-6"
          reaction={
            <button
              type="button"
              aria-label="תגובות"
              className="absolute top-full left-[22px] -mt-[10px] flex h-[73px] w-[86px] items-center justify-center rounded-[36px] border-3 border-[#0b1014] bg-[#22272b]"
            >
              <Heart className="h-11 w-12" soft />
            </button>
          }
        >
          <EmojiRow poppers={7} faces={5} />
        </Bubble>

        <Bubble time="13:56" sent className="mt-[78px]">יאללה שנמשיך ככה!!</Bubble>

        <div aria-hidden="true" className="mt-[30px] h-16 w-60 self-center rounded-3xl bg-[#14191d]" />
      </section>
    </main>
  );
}
